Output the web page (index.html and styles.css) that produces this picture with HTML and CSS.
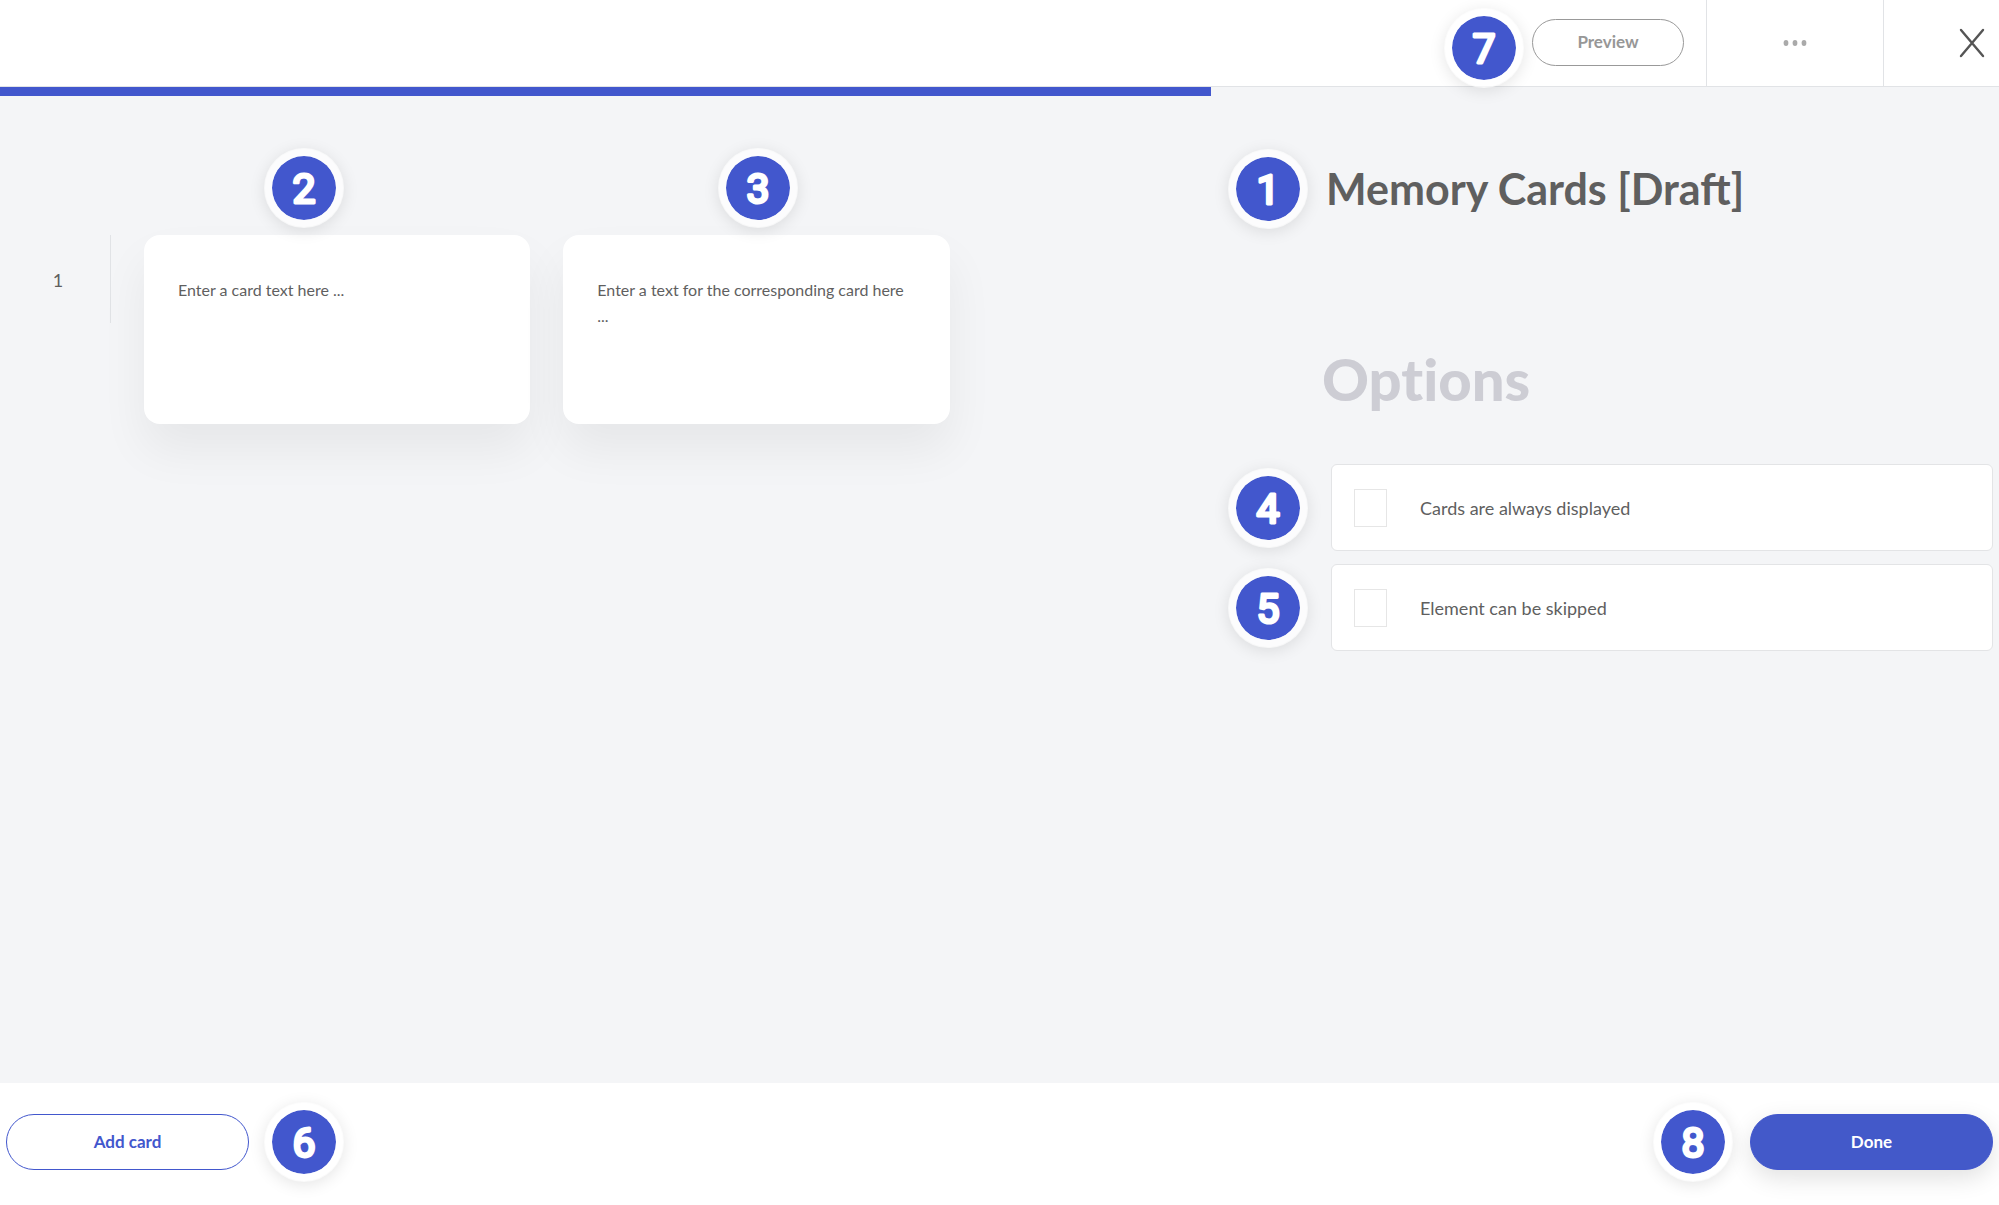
FILE: index.html
```html
<!DOCTYPE html>
<html lang="en">
<head>
  <meta charset="UTF-8">
  <title>Memory Cards</title>
  <meta name="viewport" content="width=device-width, initial-scale=1.0">
  <link rel="stylesheet" href="styles.css">
</head>
<body>
  <header class="topbar">
    <div class="topbar-preview">
      <svg class="badge" viewBox="0 0 64 64"><text x="32" y="47">7</text></svg>
      <button type="button" class="btn btn-preview">Preview</button>
    </div>
    <button type="button" class="icon-btn menu-btn" aria-label="More">
      <svg width="26" height="8" viewBox="0 0 26 8">
        <ellipse cx="4" cy="4" rx="2.4" ry="3"/>
        <ellipse cx="13" cy="4" rx="2.4" ry="3"/>
        <ellipse cx="22" cy="4" rx="2.4" ry="3"/>
      </svg>
    </button>
    <button type="button" class="icon-btn close-btn" aria-label="Close">
      <svg width="26" height="30" viewBox="0 0 26 30">
        <path d="M2 2L24 28M24 2L2 28"/>
      </svg>
    </button>
  </header>

  <main class="editor">
    <section class="cards">
      <div class="progress"></div>
      <div class="card-row">
        <div class="row-number">1</div>
        <div class="card">
          <svg class="badge badge-first" viewBox="0 0 64 64"><text x="32" y="47">2</text></svg>
          <textarea aria-label="Card text" placeholder="Enter a card text here ..."></textarea>
        </div>
        <div class="card">
          <svg class="badge badge-second" viewBox="0 0 64 64"><text x="32" y="47">3</text></svg>
          <textarea aria-label="Corresponding card text" placeholder="Enter a text for the corresponding card here ..."></textarea>
        </div>
      </div>
    </section>

    <aside class="settings">
      <div class="settings-row title-row">
        <svg class="badge" viewBox="0 0 64 64"><text x="32" y="47">1</text></svg>
        <h1>Memory Cards [Draft]</h1>
      </div>
      <h2>Options</h2>
      <div class="options">
        <div class="settings-row">
          <svg class="badge" viewBox="0 0 64 64"><text x="32" y="47">4</text></svg>
          <label class="option" for="alwaysDisplayed">
            <input type="checkbox" id="alwaysDisplayed">
            Cards are always displayed
          </label>
        </div>
        <div class="settings-row">
          <svg class="badge" viewBox="0 0 64 64"><text x="32" y="47">5</text></svg>
          <label class="option" for="canBeSkipped">
            <input type="checkbox" id="canBeSkipped">
            Element can be skipped
          </label>
        </div>
      </div>
    </aside>
  </main>

  <footer class="bottombar">
    <div class="bottombar-group">
      <button type="button" class="btn btn-add">Add card</button>
      <svg class="badge" viewBox="0 0 64 64"><text x="32" y="47">6</text></svg>
    </div>
    <div class="bottombar-group">
      <svg class="badge" viewBox="0 0 64 64"><text x="32" y="47">8</text></svg>
      <button type="button" class="btn btn-done">Done</button>
    </div>
  </footer>
</body>
</html>
```

FILE: styles.css
```css
* {
  box-sizing: border-box;
}

body {
  margin: 0;
  min-height: 100vh;
  display: flex;
  flex-direction: column;
  font-family: Lato, sans-serif;
  font-size: 18px;
  line-height: 26px;
  color: #5f5f5f;
  background-color: #f4f5f7;
}

button,
textarea {
  font: inherit;
  color: inherit;
}

/* numbered badges */
.badge {
  flex: none;
  width: 80px;
  height: 80px;
  border: 8px solid rgba(255, 255, 255, 0.7);
  border-radius: 50%;
  background-color: #4257cd;
  background-clip: padding-box;
  box-shadow: 0 3px 16px rgba(0, 0, 0, 0.1);
}

.badge text {
  font-family: Roboto, sans-serif;
  font-size: 41px;
  font-weight: 400;
  text-anchor: middle;
  fill: #fff;
  stroke: #fff;
  stroke-width: 3px;
  stroke-linejoin: round;
}

/* buttons */
.btn {
  border-radius: 28px;
  font-size: 17px;
  font-weight: bold;
  cursor: pointer;
}

.btn-preview {
  width: 152px;
  height: 47px;
  margin-bottom: 2px;
  border: 1px solid #999;
  background: none;
  color: #979797;
}

.btn-add,
.btn-done {
  width: 243px;
  height: 56px;
  border: 1px solid #4257cd;
}

.btn-add {
  background-color: #fff;
  color: #4257cd;
}

.btn-done {
  background-color: #4359c9;
  color: #fff;
  box-shadow: 0 8px 24px rgba(0, 0, 0, 0.12);
}

/* top bar */
.topbar {
  position: relative;
  z-index: 1;
  display: flex;
  justify-content: flex-end;
  height: 87px;
  background-color: #fff;
  border-bottom: 1px solid #e1e3e6;
}

.topbar-preview {
  display: flex;
  align-items: center;
  gap: 8px;
  padding-right: 22px;
}

.topbar-preview .badge {
  margin-top: 10px;
}

.icon-btn {
  display: flex;
  align-items: center;
  justify-content: center;
  padding: 0;
  border: none;
  border-left: 1px solid #e1e3e6;
  background: none;
  cursor: pointer;
}

.menu-btn {
  width: 177px;
  fill: #aaa;
}

.close-btn {
  width: 116px;
  justify-content: flex-end;
  padding-right: 14px;
  stroke: #555;
  stroke-width: 2.4px;
  stroke-linecap: round;
}

/* editor */
.editor {
  flex: 1;
  display: grid;
  grid-template-columns: 1211fr 788fr;
}

.progress {
  height: 9px;
  background-color: #4257cd;
}

.card-row {
  display: flex;
  gap: 33px;
  padding-top: 139px;
}

.row-number {
  width: 111px;
  height: 88px;
  padding-left: 6px;
  line-height: 90px;
  text-align: center;
  border-right: 1px solid #e1e3e6;
}

.card {
  position: relative;
  flex: 0 0 31.9%;
}

.card textarea {
  display: block;
  width: 100%;
  height: 189px;
  padding: 42px 34px;
  border: none;
  border-radius: 16px;
  resize: none;
  font-size: 16px;
  background-color: #fff;
  box-shadow: 0 26px 48px rgba(0, 0, 0, 0.06);
}

.card textarea::placeholder {
  color: #5f5f5f;
}

.card .badge {
  position: absolute;
  top: -87px;
}

.badge-first {
  left: 31%;
}

.badge-second {
  left: 40%;
}

/* settings */
.settings {
  padding: 62px 6px 0 17px;
}

.settings-row {
  display: flex;
  align-items: center;
  gap: 23px;
}

.title-row {
  gap: 18px;
}

h1,
h2 {
  margin: 0;
}

h1 {
  font-size: 43px;
  line-height: 56px;
}

h2 {
  margin: 112px 0 48px;
  padding-left: 94px;
  font-size: 58px;
  line-height: 75px;
  font-weight: 900;
  font-variant-ligatures: none;
  color: #cdcdd4;
}

.options {
  display: flex;
  flex-direction: column;
  gap: 13px;
}

.option {
  flex: 1;
  display: flex;
  align-items: center;
  gap: 33px;
  height: 87px;
  padding-left: 22px;
  border: 1px solid #e3e4e6;
  border-radius: 6px;
  background-color: #fff;
}

.option input {
  appearance: none;
  width: 33px;
  height: 38px;
  margin: 0;
  border: 1px solid #e6e6e6;
}

.option input:checked {
  background-color: #4257cd;
}

/* bottom bar */
.bottombar {
  display: flex;
  justify-content: space-between;
  padding: 19px 6px 23px;
  background-color: #fff;
}

.bottombar-group {
  display: flex;
  align-items: center;
  gap: 15px;
}

.bottombar-group:last-child {
  gap: 17px;
}
```
